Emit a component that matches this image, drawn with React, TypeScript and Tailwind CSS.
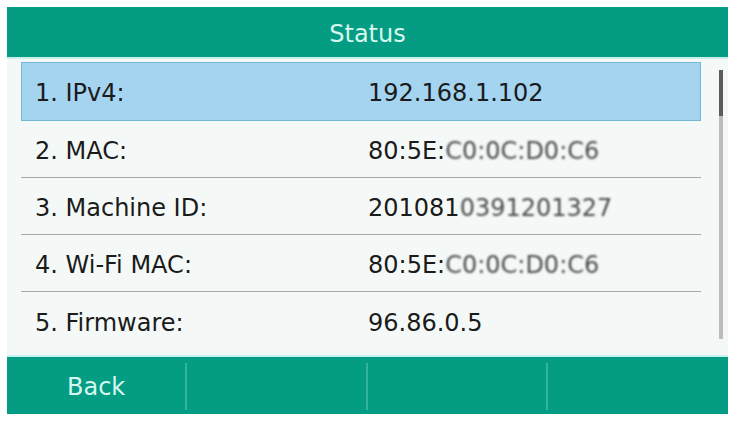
import React from "react";

const font = { fontFamily: '"DejaVu Sans", Verdana, sans-serif' };

function Masked({ children }: { children: React.ReactNode }) {
  return <span className="blur-[0.8px] text-[#4a4a4a]">{children}</span>;
}

const rows: { label: string; value: React.ReactNode }[] = [
  { label: "1. IPv4:", value: "192.168.1.102" },
  { label: "2. MAC:", value: <>80:5E:<Masked>C0:0C:D0:C6</Masked></> },
  { label: "3. Machine ID:", value: <>201081<Masked>0391201327</Masked></> },
  { label: "4. Wi-Fi MAC:", value: <>80:5E:<Masked>C0:0C:D0:C6</Masked></> },
  { label: "5. Firmware:", value: "96.86.0.5" },
];

export default function App() {
  return (
    <div className="w-[735px] h-[422px] bg-white overflow-hidden pt-[7px]" style={font}>
      <div className="mx-[7px] flex flex-col">
        <div className="h-[50px] bg-[#049d84] flex items-center justify-center text-[24px] text-[#d6f7ee] pt-[3px]">
          Status
        </div>
        <div className="h-[2px] bg-[#c9efe6]" />
        <div className="h-[296px] bg-[#f4f9f7] flex">
          <div className="ml-[14px] w-[680px] pt-[3px] flex flex-col">
            {rows.map((r, i) => (
              <div
                key={i}
                className={
                  i === 0
                    ? "h-[59px] flex items-center pt-[3px] bg-[#a4d4f0] border border-[#72b9d6] text-[24px] text-[#1b1b1b]"
                    : "h-[57px] flex items-center pt-[4px] border-b border-[#a8a8a8] text-[24px] text-[#1b1b1b]" +
                      (i === rows.length - 1 ? " border-b-0" : "")
                }
              >
                <div className={i === 0 ? "w-[346px] pl-[13px]" : "w-[347px] pl-[14px]"}>{r.label}</div>
                <div>{r.value}</div>
              </div>
            ))}
          </div>
          <div className="ml-[18px] mt-[11px] w-[4px] h-[269px] bg-[#bcbcbc] flex flex-col">
            <div className="h-[46px] bg-[#5c5c5c]" />
          </div>
        </div>
        <div className="h-[2px] bg-[#c6f3ef]" />
        <div className="h-[57px] bg-[#049d84] flex">
          {["Back", "", "", ""].map((t, i) => (
            <div key={i} className="flex-1 flex items-stretch">
              <div className="flex-1 flex items-center justify-center text-[24px] text-[#d6f7ee] pt-[2px]">{t}</div>
              {i < 3 && <div className="w-[2px] mt-[6px] mb-[4px] bg-[#35b39c]" />}
            </div>
          ))}
        </div>
      </div>
    </div>
  );
}
